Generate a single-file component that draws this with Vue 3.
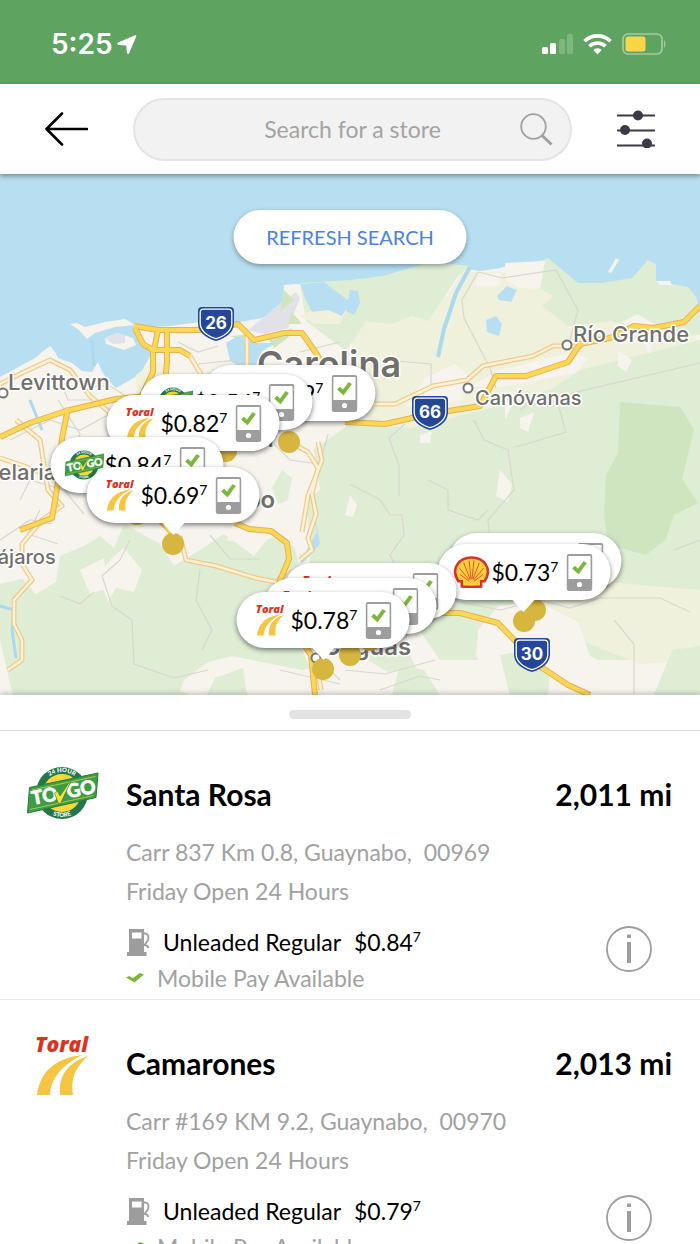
<template>
  <div class="screen">
    <svg class="sprite" aria-hidden="true">
      <symbol id="logo-togo" viewBox="0 0 72 54">
        <circle cx="35" cy="27" r="26" fill="#23774a" />
        <circle cx="35" cy="27" r="19" fill="#f8d938" />
        <path d="M18 20h34M17 26h36M18 32h34M20 38h30M24 14h22" stroke="#eec02f" stroke-dasharray="2 2" />
        <path id="togo-top" d="M14 27a21 21 0 0 1 42 0" fill="none" />
        <path id="togo-bottom" d="M11 27a24 24 0 0 0 48 0" fill="none" />
        <text font-family="Lato, sans-serif" font-size="6" font-weight="900" fill="#fff" text-anchor="middle">
          <textPath href="#togo-top" startOffset="50%">24 HOUR</textPath>
        </text>
        <text font-family="Lato, sans-serif" font-size="6" font-weight="900" fill="#fff" text-anchor="middle">
          <textPath href="#togo-bottom" startOffset="50%">STORE</textPath>
        </text>
        <path d="M2.500 21.500 71 7l-2 24.500L.5 47z" fill="#3f9c45" stroke="#23774a" />
        <path d="M5 24 68.500 10.500M3 43.500 66.500 29.500" stroke="#a5cb4b" stroke-width="1" />
        <g transform="rotate(-11 36 27)" font-family="Lato, sans-serif" font-size="19" font-weight="900" fill="#fff" stroke="#fff" stroke-width=".6">
          <text x="4" y="33">TO</text>
          <text x="40" y="33">GO</text>
        </g>
        <path d="M27.500 27l3-2 2.500 5L46 11 33.500 37.500h-2z" fill="#f8e233" stroke="#23774a" stroke-width=".6" />
      </symbol>
      <symbol id="logo-toral" viewBox="0 0 54 61">
        <text x="-1" y="17" font-family="'Open Sans', sans-serif" font-size="21" font-weight="800" font-style="italic" fill="#d8341f">Toral</text>
        <path d="M1 60C4 36 20 23 46 20 27 30 15 42 14 60z" fill="#f6c544" />
        <path d="M24 60C22 40 33 27 52 21 37 35 35 45 37 60z" fill="#f6c544" />
      </symbol>
      <symbol id="logo-shell" viewBox="0 0 36 33">
        <path d="M8 31.500V26H4.500C-4 13 5 1.500 18 1.500S40 13 31.500 26H28v5.500l-10 .5z" fill="#f8cf3c" stroke="#dc2f2f" stroke-width="2.600" />
        <path d="M15.500 26 6 19M16 25 5.500 12.500M16.500 24 10 7M17.500 24 15.500 4.500M18.500 24l2-19.500M19.500 24 26 7M20 25l10.500-12.500M20.500 26l9.500-7" stroke="#dc2f2f" stroke-width=".8" />
      </symbol>
      <symbol id="icon-phone" viewBox="0 0 26 37">
        <rect x="1" y="1" width="24" height="35" rx="1.500" fill="#fff" stroke="#9d9d9d" stroke-width="1.800" />
        <path d="M1 25h24v10a1 1 0 0 1-1 1H2a1 1 0 0 1-1-1z" fill="#9d9d9d" />
        <circle cx="13" cy="30.500" r="2.600" fill="#fff" />
        <path d="M6 14.500l2.500-2.500 3 3L17 7.500l3 1.500-8 11z" fill="#7cb63b" stroke="#7cb63b" stroke-width=".6" />
      </symbol>
      <symbol id="road-shield" viewBox="0 0 38 36">
        <path d="M5 1h28q4 0 4 4v13q-1 12-18 17Q2 30 1 18V5q0-4 4-4z" fill="#24479a" />
        <path d="M6.500 3.200h25q3.300 0 3.300 3.300V18q-1 10-15.800 14.700Q4.200 28 3.200 18V6.500q0-3.300 3.300-3.300z" fill="none" stroke="#fff" stroke-width="1.300" />
      </symbol>
    </svg>

    <header class="status">
      <span class="time">5:25
        <svg width="20" height="19" viewBox="0 0 20 19"><path d="M18.500 1 11.500 17.500Q11 18.500 10.800 17.500L10 9.500 2 9Q.5 8.800 2 8z" fill="#fff" stroke="#fff" stroke-width="1.800" stroke-linejoin="round" /></svg>
      </span>
      <div class="indicators">
        <svg width="31" height="20" viewBox="0 0 31 20">
          <rect x="0" y="13" width="6" height="7" rx="1.500" fill="#fff" />
          <rect x="8" y="9" width="6" height="11" rx="1.500" fill="#fff" />
          <rect x="17" y="5" width="6" height="15" rx="1.500" fill="#7fb581" />
          <rect x="25" y="0" width="6" height="20" rx="1.500" fill="#7fb581" />
        </svg>
        <svg width="29" height="22" viewBox="0 0 29 22" fill="none" stroke="#fff" stroke-width="3.600">
          <path d="M1.500 8.200a18.500 18.500 0 0 1 26 0M6.500 13.200a11.500 11.500 0 0 1 16 0" />
          <path d="M14.500 21.500 10.300 17a6 6 0 0 1 8.400 0z" fill="#fff" stroke="none" />
        </svg>
        <svg width="45" height="22" viewBox="0 0 45 22">
          <rect x="1" y="1" width="39" height="20" rx="5" fill="none" stroke="#a5cca6" stroke-width="1.600" />
          <rect x="3.500" y="3.500" width="20" height="15" rx="2.500" fill="#f8d648" />
          <path d="M42 7q3 4 0 8z" fill="#a5cca6" />
        </svg>
      </div>
    </header>

    <nav class="topbar">
      <button class="icon-btn" type="button" aria-label="Back">
        <svg width="43" height="34" viewBox="0 0 43 34" fill="none" stroke="#000" stroke-width="2.600" stroke-linecap="round" stroke-linejoin="round"><path d="M42 17H2M17 1.500 1.500 17 17 32.500" /></svg>
      </button>
      <label class="search">
        <input v-model="query" type="text" placeholder="Search for a store" aria-label="Search for a store" />
        <svg width="33" height="33" viewBox="0 0 33 33" fill="none" stroke="#a0a0a0"><circle cx="13.500" cy="13.500" r="12.300" stroke-width="1.800" /><path d="M22 22.500 31.500 31.500" stroke-width="3" /></svg>
      </label>
      <button class="icon-btn" type="button" aria-label="Filters">
        <svg width="38" height="38" viewBox="0 0 38 38" fill="#3b3a45" stroke="#3b3a45" stroke-width="2.200">
          <path d="M0 5.500h38M0 20.500h38M0 35.500h38" />
          <g stroke="none"><circle cx="21" cy="5.500" r="5" /><circle cx="8" cy="20" r="5" /><circle cx="30" cy="33.500" r="5" /></g>
        </svg>
      </button>
    </nav>

    <main class="map">
      <svg class="tiles" viewBox="0 174 700 521" preserveAspectRatio="xMidYMid slice">
        <rect y="174" width="700" height="521" fill="#b7dff1" />
        <!-- land -->
        <path :d="coast" fill="#f7f3ed" />
        <path d="M70 324l7-1 8 4 20-5 20-3 10 6-20 2-20 6-8 6-8-9zM105 338l12-5 16 5 3 7-12 5-18-6z" fill="#f7f3ed" />
        <path d="M105 338l12-5 8 2 0 8-12 1z" fill="#e1e2e8" />
        <!-- open country -->
        <path d="M352 325l40-14 56-15 14-24 60 0 46 20 60 10 74 40v90l-90 10-110 8-90 10-34-20-26-60z" fill="#f0f1dc" />
        <path d="M300 283l50-3 33-4 47-14 40 4-12 10-30 45-16-5-20 8-26-3-20 30-40-30z" fill="#deedd4" />
        <path d="M536 262l12-4 30 25 24 0 30-5 16-18 8 4v17l32 6 8 10 4 12v26l-20 2-10-12-32 4-28-8-42 5-26-20 12-10-20-10z" fill="#deedd4" />
        <path d="M425 378l30-14 12 10-4 26-36 8-20-2zM505 263l40-2-5 28-20-1-14-8zM478 273l24 0-2 12-24 2zM470 386l30-16 70-17 18 5-12 15-80 15zM622 322l16-8 16 10-4 34-8-22z" fill="#f7f3ed" />
        <path d="M136 375l20-15 12 8-2 20-30 12zM300 316l40-20 8 10-8 18-24 0z" fill="#f0f1dc" />
        <!-- forest to the south -->
        <path d="M350 424l60 4 80-20 60-18 30-20 120-30v320H440l-26-38-50-20-60-90 6-60z" fill="#deedd4" />
        <path d="M330 440l26-8 10 10 4 80-20 60-30 10-10-30-4-80z" fill="#deedd4" />
        <path d="M0 580l20-4 16 18 20-12 4-26 24-10 16-10 14 12 10-24 36 20 14 22 26-16 24-16 30 22 16-20 24 10 8 30-10 50 30 70-10 30H20L0 640z" fill="#deedd4" />
        <path d="M112 558l12-10 18 22-8 22-18-4-8 14-10-26zM80 570l24-12 4 30-18 6zM184 680l24-18 24-6 70 14 60-12 50 37H190l-10-4zM0 500l40 30-6 46-34 8zM240 520l44-8 10 20-44 12-24-4zM290 440l24 10 6 40-24 16-20-14z" fill="#f7f3ed" />
        <path d="M215 678l28-10 4 27h-40zM282 470l10 8-4 22-10 4-6-16zM366 640l40 6 10 22-28 4-20-12z" fill="#deedd4" />
        <path d="M620 402l60 5 14 22-12 50 16 24-24 12-8 24-20 16-38-10-4-30 2-40 12-22z" fill="#cfe5c0" />
        <path d="M498 610l60-24 50-4 92 8v70l-60 4-50-20z" fill="#f0f1dc" />
        <path d="M478 630l20-24 40-4 40 20 12 34 32 16-8 24H500l-24-40z" fill="#f7f3ed" />
        <path d="M500 655l30-5 20 20-2 26h-38zM672 650l28-4v49h-46zM400 665l24 5 16 25h-48z" fill="#deedd4" />
        <path d="M248 330l34-28 14-10 4 6-12 30-24 6z" fill="#e1e2e8" />
        <path d="M284 290l10 10-14 12zM292 312l10 12-14 0zM268 338l24-10-4 10-14 10zM230 336l22-2-12 6z" fill="#cfe6bd" />
        <path d="M500 470l12 14-4 18-12-6zM505 390l8 14-8 16zM520 418l14-6-6 20-8-4zM618 350l14 10-6 12-8-6zM420 435l12-4-2 12h-10zM350 495l7 10-4 12-8-2z" fill="#f7f3ed" />
        <!-- lagoons, lakes and rivers -->
        <path d="M226 343l12-7 18 7 20 0-14 8-6 14-12 4-14-8zM300 284l24-2 26 20-8 14-14-6-16 2-6-12zM350 290l8 1 2 12-6 12-8-4zM497 296l10-10 10 4-6 12-12-2zM486 320l10-4 6 8-3 12-12-4zM312 512l5 20-8 14-10 18 5-2 16-18-4-22z" fill="#b7dff1" />
        <g fill="none" stroke="#a9daf0">
          <path d="M470 267l-14 26-12 36-6 28" stroke-width="4" />
          <path d="M0 606l14 4-2 20 4 28M92 340l2 26M30 400l12 30" stroke-width="3" />
        </g>
        <path d="M608 272l8-14 3 2-8 13zM656 281l14 0 2 4-12 0z" fill="#f7f3ed" />
        <!-- boundaries and side streets -->
        <g fill="none" stroke="#d9d6d0" stroke-width="1.200">
          <path d="M478 272l24 6 54-8 22 40-8 30M478 272l-16 28 2 18 26 50 6 20M385 360l46 4 0 20M405 424l-16 14 10 28 0 30M474 420l10 20 24 10 6 40-26 30 2 20M516 447l50-15-10-35 144-34M428 480l20 10 0 20 30 10 10-10M350 484l30 16 10 15 12 0 2 20-14 20 10 20-30 20" />
          <path d="M10 440l40-20 30 10 30-16M20 500l10-20 34 10 20 24M40 510l-12 24 30 10M130 540l-10 20-18 16 10 30 20 14 2 44 40 14 34-8M200 570l-4 30 16 30-10 20M60 596l20 8 14-12M210 535l20 24 30 0M260 430l30 30 30 4 8-30M60 380l8 20 24 0M178 342l20 10 20-6M100 500l30 10 10-10M450 600l50 10 40-10 30 8 30-10 60 0 30 14M345 670l40 4 50-14M380 690l40-14 20 4M0 470l50 4 20 20" />
          <path d="M0 540l30-20 22 4M58 400l22 34-12 30M132 400l-22-14-20 0M250 380l-12-20-40 4M300 352l40-10M280 670l60 14M300 640l40 40M614 620l20 24 0 50M674 550l26-10M520 410l14-10" />
        </g>
        <!-- secondary roads -->
        <g fill="none" stroke-linejoin="round">
          <g stroke="#efc98f" stroke-width="5">
            <path v-for="d in secondary" :key="d" :d="d" />
          </g>
          <g stroke="#fdf3d4" stroke-width="2.500">
            <path v-for="d in secondary" :key="d" :d="d" />
          </g>
        </g>
        <!-- highways -->
        <g fill="none" stroke-linejoin="round">
          <g stroke="#e9ae58" stroke-width="6">
            <path v-for="d in highways" :key="d" :d="d" />
          </g>
          <g stroke="#f9d954" stroke-width="4">
            <path v-for="d in highways" :key="d" :d="d" />
          </g>
        </g>
        <g fill="#fff" stroke="#77756f" stroke-width="2">
          <circle cx="3" cy="393" r="4.500" />
          <circle cx="567" cy="345" r="4.500" />
          <circle cx="468" cy="388" r="4.500" />
          <circle cx="316" cy="658" r="4.500" />
        </g>
        <g class="places">
          <text v-for="p in places" :key="p.name" :class="p.kind" :x="p.x" :y="p.y">{{ p.name }}</text>
        </g>
        <g v-for="s in shields" :key="s.no">
          <use href="#road-shield" :x="s.x - 19" :y="s.y - 17" width="38" height="36" />
          <text class="shield-no" :x="s.x" :y="s.y + 6">{{ s.no }}</text>
        </g>
      </svg>

      <span v-for="(p, i) in pins" :key="'dot' + i" class="dot" :style="place(p)"></span>
      <button v-for="(p, i) in pins" :key="i" class="pin" :class="{ tip: p.tip }" type="button" :style="place(p)">
        <svg class="brand" :class="p.brand"><use :href="'#logo-' + p.brand" /></svg>
        <span class="pin-price">${{ p.price }}<sup>7</sup></span>
        <svg class="phone"><use href="#icon-phone" /></svg>
      </button>

      <button class="refresh" type="button">REFRESH SEARCH</button>
    </main>

    <section class="sheet">
      <div class="grip"><span></span></div>
      <article v-for="s in stores" :key="s.name" class="store">
        <svg class="logo" :class="s.brand"><use :href="'#logo-' + s.brand" /></svg>
        <div class="info">
          <div class="title">
            <h2>{{ s.name }}</h2>
            <span>{{ s.distance }}</span>
          </div>
          <p class="address">{{ s.address }}</p>
          <p class="hours">Friday Open 24 Hours</p>
          <p class="fuel">
            <svg width="24" height="27" viewBox="-1 0 24 27">
              <path d="M2 0h15v23h2.500v4H0v-4h2z" fill="#9d9d9d" />
              <path d="M5 3.500h9.500v6H5z" fill="#fff" />
              <path d="M17 4.500h2q2.500 1 2.500 4.500 0 3-2.500 5L17.500 16q3 0 4 3" fill="none" stroke="#9d9d9d" stroke-width="1.800" />
            </svg>
            <span>Unleaded Regular</span>
            <span>${{ s.price }}<sup>7</sup></span>
          </p>
          <p class="pay">
            <svg width="18" height="10" viewBox="0 0 18 10"><path d="M0 4.500l3-1.500 4 2L14 0l4 1.500L8.500 9.500z" fill="#7cb63b" /></svg>
            Mobile Pay Available
          </p>
          <button class="details" type="button" :aria-label="'Details for ' + s.name">
            <svg width="46" height="46" viewBox="0 0 46 46">
              <circle cx="23" cy="23" r="22" fill="none" stroke="#9d9d9d" stroke-width="1.800" />
              <path d="M21 16h4v21h-4zM21 8.500h4v3.500h-4z" fill="#9d9d9d" />
            </svg>
          </button>
        </div>
      </article>
    </section>
  </div>
</template>

<script setup>
import { ref } from 'vue'

const query = ref('')

const stores = [
  { name: 'Santa Rosa', brand: 'togo', distance: '2,011 mi', address: 'Carr 837 Km 0.8, Guaynabo,\u00a0 00969', price: '0.84' },
  { name: 'Camarones', brand: 'toral', distance: '2,013 mi', address: 'Carr #169 KM 9.2, Guaynabo,\u00a0 00970', price: '0.79' },
]

// back to front
const pins = [
  { x: 289, y: 442, brand: 'toral', price: '0.79' },
  { x: 226, y: 451, brand: 'togo', price: '0.54' },
  { x: 193, y: 472, brand: 'toral', price: '0.82' },
  { x: 137, y: 514, brand: 'togo', price: '0.84' },
  { x: 173, y: 544, brand: 'toral', price: '0.69', tip: true },
  { x: 535, y: 610, brand: 'shell', price: '0.73' },
  { x: 524, y: 621, brand: 'shell', price: '0.73', tip: true },
  { x: 370, y: 640, brand: 'toral', price: '0.78' },
  { x: 350, y: 655, brand: 'toral', price: '0.78' },
  { x: 323, y: 669, brand: 'toral', price: '0.78', tip: true },
]

function place(p) {
  return { left: (p.x / 700) * 100 + '%', top: ((p.y - 174) / 521) * 100 + '%' }
}

const places = [
  { name: 'Levittown', x: 8, y: 390, kind: 'town' },
  { name: 'Río Grande', x: 573, y: 342, kind: 'town' },
  { name: 'Candelaria', x: -57, y: 480, kind: 'town' },
  { name: 'Canóvanas', x: 475, y: 405, kind: 'village' },
  { name: 'Pájaros', x: -15, y: 564, kind: 'village' },
  { name: 'Carolina', x: 257, y: 377, kind: 'city' },
  { name: 'Tr', x: 253, y: 447, kind: 'suburb' },
  { name: 'Guaynabo', x: 157, y: 508, kind: 'suburb' },
  { name: 'Caguas', x: 323, y: 655, kind: 'suburb' },
]

const shields = [
  { no: '26', x: 216, y: 323 },
  { no: '66', x: 430, y: 412 },
  { no: '30', x: 532, y: 654 },
]

const coast = `M0 377l35-19 7-6 8-6 5 6 3 6 14 5 10 8 10 1 6-10 4 10 8 10 6 6 14-8 10-6 8-14 5-10
  -13-8-5-14 35-2 30-4 35 1 27-5 13-6 8-10 1-17 11-1 20 1 35-2 33-4 47-14 25 2 25 4 20-3 10-3
  20-2 15-2 10 10 13 10 6 5 11 2 15-4 15 2 17-5 8-10 8-8 7 4 1 16 16 4 13 4 10 5 2 10 3 3V695H0z`

const highways = [
  'M0 437l30-14 36-12 50-12 40-4',
  'M134 326l24 4 44 0 36-6 16 16 30-7 18 0 14 20 14 24 20 24',
  'M135 328l8 16 10 6 0 22-14 30-4 10M158 330l-4 20 26 0 10 6M167 332l0 30-4 40',
  'M68 408l-6 30-4 44-6 36-32 12',
  'M235 523l14 6 22 2 16 12 2 16-10 24 10 40 22 32 4 40',
  'M345 422l40 2 45-10 50-8 16-30 30 0 42-14 12-18 30-6 24-12 20 2 30-6 16-16',
  'M440 613l20 0 38 10 40 42 30 20 22 10',
  'M160 520l13 14',
]

const secondary = [
  'M0 384l24-12 26-12 20 10 20 26 24 20',
  'M16 420l24 20 8 50 14 16-20 14-20 24 0 20 10 16-18 20 0 24 8 16 0 20-14 10',
  'M0 458l24 8 20 8 20-8 30 4',
  'M180 536l6 24 30 6 40 12 20 4 14-14',
  'M290 442l18 10 10 16-6 26 4 20-8 24 4 12-12 10',
  'M375 404l20 0 38-18 34-6 16-14 50-10 20-10 30 0',
  'M247 335l0 36M190 356l12 20M321 690l-4-24',
  'M318 442l4 18-14 36-6 36',
]
</script>

<style>
body {
  margin: 0;
  background: #fff;
}
</style>

<style scoped>
.screen {
  height: 100vh;
  overflow: hidden;
  display: flex;
  flex-direction: column;
  background: #fff;
  color: #000;
  font-family: Lato, "Liberation Sans", sans-serif;
}

.screen * { box-sizing: border-box; }

.sprite { display: none; }

button {
  font: inherit;
  border: none;
  background: none;
  padding: 0;
  cursor: pointer;
}

svg { flex: none; }

.status {
  flex: none;
  height: 84px;
  padding: 4px 33px 0 51px;
  display: flex;
  align-items: center;
  justify-content: space-between;
  background: #5fa361;
}

.time {
  display: flex;
  align-items: center;
  gap: 4px;
  color: #fff;
  font-family: Inter, sans-serif;
  font-size: 28px;
  font-weight: 600;
}

.indicators {
  display: flex;
  align-items: center;
  gap: 10px;
}

.topbar {
  flex: none;
  position: relative;
  z-index: 2;
  height: 90px;
  padding: 0 45px;
  display: flex;
  align-items: center;
  gap: 45px;
  background: #fff;
  box-shadow: 0 2px 5px rgba(0, 0, 0, 0.4);
}

.icon-btn {
  flex: none;
  display: flex;
}

.search {
  flex: 1;
  min-width: 0;
  height: 63px;
  padding: 0 17px 0 50px;
  display: flex;
  align-items: center;
  border: 2px solid #e4e4e4;
  border-radius: 32px;
  background: #f2f2f2;
}

.search input {
  flex: 1;
  min-width: 0;
  border: none;
  outline: none;
  background: none;
  font: inherit;
  font-size: 23px;
  text-align: center;
}

.search input::placeholder {
  color: #a3a3a3;
  opacity: 1;
}

.map {
  flex: none;
  position: relative;
  aspect-ratio: 700 / 521;
  overflow: hidden;
}

.tiles {
  display: block;
  width: 100%;
  height: 100%;
}

.places text {
  font-family: Inter, sans-serif;
  fill: #716f6b;
  stroke: #fff;
  stroke-width: 3px;
  stroke-linejoin: round;
  paint-order: stroke;
}

.places .town {
  font-size: 22px;
  font-weight: 500;
}

.places .village {
  font-size: 20px;
  font-weight: 500;
}

.places .city {
  font-size: 36px;
  font-weight: 600;
}

.places .suburb {
  font-size: 24px;
  font-weight: 600;
}

.shield-no {
  font-family: Inter, sans-serif;
  font-size: 17px;
  font-weight: 700;
  fill: #fff;
  text-anchor: middle;
}

.dot {
  position: absolute;
  width: 22px;
  height: 22px;
  border-radius: 50%;
  background: #d6b63e;
  transform: translate(-50%, -50%);
}

.pin {
  position: absolute;
  width: 173px;
  height: 56px;
  padding: 0 18px 0 14px;
  display: flex;
  align-items: center;
  border-radius: 28px;
  background: #fff;
  box-shadow: 0 2px 5px rgba(0, 0, 0, 0.5);
  color: #000;
  transform: translate(-50%, -77px);
}

.pin.tip::after {
  content: "";
  position: absolute;
  top: 100%;
  left: 50%;
  border: 11px solid transparent;
  border-top: 12px solid #fff;
  border-bottom: 0;
  transform: translateX(-50%);
}

.brand {
  width: 40px;
  height: 32px;
}

.phone {
  width: 26px;
  height: 37px;
  margin-left: auto;
}

.pin-price {
  font-size: 23px;
  line-height: 30px;
}

sup {
  font-size: 14px;
  line-height: 0;
  vertical-align: 9px;
}

.refresh {
  position: absolute;
  top: 36px;
  left: 50%;
  width: 233px;
  height: 54px;
  border-radius: 27px;
  background: #fff;
  box-shadow: 0 2px 5px rgba(0, 0, 0, 0.35);
  color: #4a82dc;
  font-size: 20px;
  transform: translateX(-50%);
}

.sheet {
  flex: 1;
  min-height: 0;
  position: relative;
  background: #fff;
  box-shadow: 0 -2px 5px rgba(0, 0, 0, 0.2);
}

.grip {
  height: 36px;
  padding-top: 15px;
  border-bottom: 1px solid #dcdcdc;
}

.grip span {
  display: block;
  width: 122px;
  height: 9px;
  margin: 0 auto;
  border-radius: 5px;
  background: #e3e3e3;
}

.store {
  display: flex;
  border-bottom: 1px solid #e6e6e6;
}

.logo {
  width: 72px;
  height: 54px;
  margin: 35px 27px 0;
}

.logo.toral {
  height: 61px;
}

.info {
  flex: 1;
  position: relative;
  padding: 46px 28px 6px 0;
}

.title {
  display: flex;
  justify-content: space-between;
  font-size: 30px;
  line-height: 34px;
  font-weight: 700;
}

.title h2 {
  margin: 0;
  font: inherit;
}

.info p {
  margin: 0;
  font-size: 23px;
  line-height: 30px;
  color: #a1a1a1;
}

.info .address { margin-top: 26px; }

.info .hours {
  margin-top: 12px;
  line-height: 24px;
  overflow: hidden;
}

.info .fuel {
  margin-top: 24px;
  display: flex;
  align-items: center;
  gap: 13px;
  color: #000;
}

.info .pay {
  margin-top: 6px;
  display: flex;
  align-items: center;
  gap: 13px;
}

.details {
  position: absolute;
  right: 48px;
  bottom: 27px;
  display: flex;
}
</style>
